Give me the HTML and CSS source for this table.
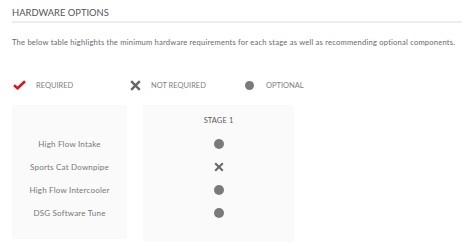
FILE: index.html
```html
<!DOCTYPE html>
<html>
<head>
<meta charset="utf-8">
<link rel="stylesheet" href="styles.css">
</head>
<body>
<div class="page">
  <h2 class="title">HARDWARE OPTIONS</h2>
  <p class="intro">The below table highlights the minimum hardware requirements for each stage as well as recommending optional components.</p>
  <div class="legend">
    <div class="legend-item item-req">
      <svg class="ico-check" width="13" height="10" viewBox="0 0 13 10"><path d="M1 5.2 L4.6 8.2 L12 1.2" fill="none" stroke="#e0141b" stroke-width="2.6" stroke-linejoin="miter"/></svg>
      <span>REQUIRED</span>
    </div>
    <div class="legend-item item-not">
      <svg class="ico-x" width="11" height="11" viewBox="0 0 11 11"><path d="M1.2 1.2 L9.8 9.8 M9.8 1.2 L1.2 9.8" stroke="#666" stroke-width="2.4"/></svg>
      <span>NOT REQUIRED</span>
    </div>
    <div class="legend-item item-opt">
      <span class="dot"></span>
      <span>OPTIONAL</span>
    </div>
  </div>
  <div class="tables">
    <div class="col col-names">
      <div class="cell head"></div>
      <div class="cell">High Flow Intake</div>
      <div class="cell">Sports Cat Downpipe</div>
      <div class="cell">High Flow Intercooler</div>
      <div class="cell">DSG Software Tune</div>
    </div>
    <div class="col col-stage">
      <div class="cell head">STAGE 1</div>
      <div class="cell"><span class="dot"></span></div>
      <div class="cell"><svg width="10" height="10" viewBox="0 0 10 10"><path d="M1.2 1.2 L8.8 8.8 M8.8 1.2 L1.2 8.8" stroke="#666" stroke-width="2"/></svg></div>
      <div class="cell"><span class="dot"></span></div>
      <div class="cell"><span class="dot"></span></div>
    </div>
  </div>
</div>
</body>
</html>
```

FILE: styles.css
```css
* { box-sizing: border-box; }
html, body { margin: 0; padding: 0; background: #fff; }
body {
  font-family: Lato, "Open Sans", sans-serif;
  color: #666;
}
.page {
  width: 462px;
  padding: 7px 0 0 12px;
}
.title {
  margin: 0;
  font-size: 9.4px;
  font-weight: 400;
  color: #555;
  line-height: 11px;
  padding-bottom: 3px;
  border-bottom: 2px solid #eee;
}
.intro {
  margin: 14px 0 0 0;
  font-size: 7.6px;
  line-height: 10px;
  color: #6a6a6a;
  letter-spacing: 0.2px;
  white-space: nowrap;
}
.legend {
  display: flex;
  align-items: center;
  margin-top: 33px;
  height: 10px;
  font-size: 7.5px;
  color: #808080;
}
.legend-item {
  display: flex;
  align-items: center;
  flex: none;
}
.item-req { width: 118px; padding-left: 1px; }
.item-req span { margin-left: 10px; }
.item-not { width: 103px; }
.item-not span { margin-left: 10px; }
.item-opt span { margin-left: 12px; }
.dot {
  display: inline-block;
  width: 9px;
  height: 9px;
  border-radius: 50%;
  background: #7a7a7a;
}
.tables {
  display: flex;
  gap: 16px;
  margin-top: 15px;
}
.col {
  background: #fafafa;
  padding-top: 4px;
  display: flex;
  flex-direction: column;
}
.col-names { width: 115px; height: 134px; }
.col-stage { width: 151px; height: 137px; }
.cell {
  height: 23px;
  display: flex;
  align-items: center;
  justify-content: center;
  font-size: 8px;
  letter-spacing: 0.2px;
  color: #777;
}
.cell.head { font-size: 7.5px; letter-spacing: 0.1px; color: #5a5a5a; }
.cell .dot { width: 10px; height: 10px; }
```
